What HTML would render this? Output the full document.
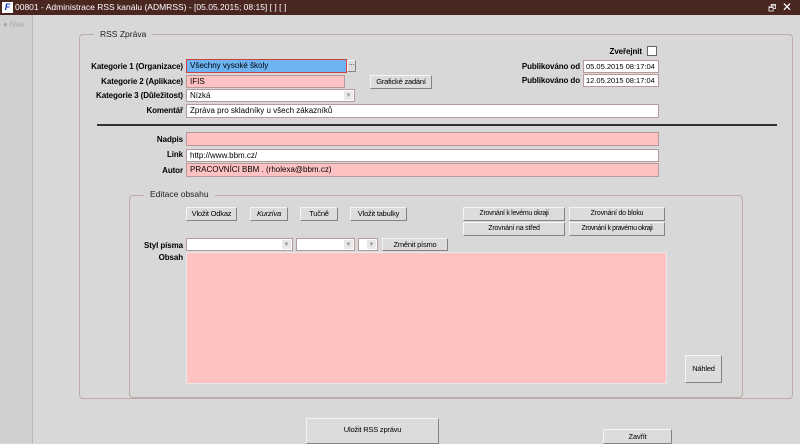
<!DOCTYPE html>
<html><head><meta charset="utf-8"><style>
*{margin:0;padding:0;box-sizing:border-box}
body{width:800px;height:443px;overflow:hidden;background:#d8d8d8;font-family:"Liberation Sans",sans-serif;font-size:8px;color:#000;position:relative}
.a{position:absolute}
.lb{position:absolute;font-weight:bold;text-align:right;white-space:nowrap;font-size:8px;letter-spacing:-0.1px;margin-top:1px}
.f{position:absolute;border:1px solid #b89a9a;padding-left:3px;line-height:12px;white-space:nowrap;overflow:hidden;font-size:8px}
.w{background:#fff}.p{background:#ffc2c2}
.b{position:absolute;background:#dcdcdc;border:1px solid;border-color:#f4f4f4 #8a8080 #8a8080 #f4f4f4;text-align:center;white-space:nowrap;font-size:7.5px;letter-spacing:-0.2px}
.dd{position:absolute;right:1px;top:1px;width:9px;bottom:1px;background:#e8e8e8;color:#999;font-size:6px;text-align:center;line-height:10px}
.box{position:absolute;border:1px solid #c0aaaa;border-radius:4px}
.leg{position:absolute;background:#d8d8d8;padding:0 6px;font-size:8.5px;color:#222}
</style></head><body>
<div class="a" style="left:0;top:0;width:800px;height:15px;background:#4a2620"></div>
<div class="a" style="left:2px;top:2px;width:11px;height:11px;background:#fff;color:#1030c0;font-weight:bold;font-size:9px;line-height:11px;text-align:center;font-style:italic">F</div>
<div class="a" style="left:15px;top:2px;color:#fff;font-size:8.5px;white-space:nowrap">00801 - Administrace RSS kanálu (ADMRSS) - [05.05.2015; 08:15] [ ] [ ]</div>
<div class="a" style="left:768px;top:1px;color:#ddd;font-size:9px">🗗</div>
<div class="a" style="left:782px;top:0px;color:#fff;font-size:12px">✕</div>
<div class="a" style="left:0;top:15px;width:33px;height:428px;background:#d0d0d0;border-right:1px solid #bfb4b4"></div>
<div class="a" style="left:3px;top:20px;color:#aaa;font-size:8px">● Nav</div>

<div class="box" style="left:79px;top:34px;width:714px;height:365px"></div>
<div class="leg" style="left:94px;top:29px">RSS Zpráva</div>

<div class="lb" style="right:617px;top:61px">Kategorie 1 (Organizace)</div>
<div class="f" style="left:186px;top:59px;width:161px;height:14px;background:#6cb4f2;border-color:#d04040">Všechny vysoké školy</div>
<div class="b" style="left:347px;top:60px;width:9px;height:12px;font-size:7px;line-height:6px">...</div>
<div class="lb" style="right:617px;top:76px">Kategorie 2 (Aplikace)</div>
<div class="f p" style="left:186px;top:75px;width:159px;height:13px">IFIS</div>
<div class="b" style="left:370px;top:75px;width:62px;height:14px;line-height:12px">Grafické zadání</div>
<div class="lb" style="right:617px;top:90px">Kategorie 3 (Důležitost)</div>
<div class="f w" style="left:186px;top:89px;width:169px;height:13px">Nízká<div class="dd">▼</div></div>
<div class="lb" style="right:617px;top:105px">Komentář</div>
<div class="f w" style="left:186px;top:104px;width:473px;height:14px">Zpráva pro skladníky u všech zákazníků</div>

<div class="lb" style="right:158px;top:46px">Zveřejnit</div>
<div class="a" style="left:647px;top:46px;width:10px;height:10px;background:#fff;border:1px solid #666"></div>
<div class="lb" style="right:220px;top:61px">Publikováno od</div>
<div class="f w" style="left:583px;top:60px;width:76px;height:13px;font-size:7.5px;padding-left:2px">05.05.2015 08:17:04</div>
<div class="lb" style="right:220px;top:75px">Publikováno do</div>
<div class="f w" style="left:583px;top:74px;width:76px;height:13px;font-size:7.5px;padding-left:2px">12.05.2015 08:17:04</div>

<div class="a" style="left:97px;top:124px;width:680px;height:2px;background:#333"></div>

<div class="lb" style="right:617px;top:134px">Nadpis</div>
<div class="f p" style="left:186px;top:132px;width:473px;height:14px"></div>
<div class="lb" style="right:617px;top:149px">Link</div>
<div class="f w" style="left:186px;top:149px;width:473px;height:13px">http://www.bbm.cz/</div>
<div class="lb" style="right:617px;top:165px">Autor</div>
<div class="f p" style="left:186px;top:163px;width:473px;height:14px">PRACOVNÍCI BBM . (rholexa@bbm.cz)</div>

<div class="box" style="left:129px;top:195px;width:614px;height:203px"></div>
<div class="leg" style="left:144px;top:189px">Editace obsahu</div>

<div class="b" style="left:186px;top:207px;width:51px;height:14px;line-height:12px">Vložit Odkaz</div>
<div class="b" style="left:250px;top:207px;width:38px;height:14px;line-height:12px;font-style:italic">Kurzíva</div>
<div class="b" style="left:300px;top:207px;width:38px;height:14px;line-height:12px">Tučně</div>
<div class="b" style="left:350px;top:207px;width:57px;height:14px;line-height:12px">Vložit tabulky</div>
<div class="b" style="left:463px;top:207px;width:102px;height:14px;line-height:12px;font-size:7px;letter-spacing:-0.3px">Zrovnání k levému okraji</div>
<div class="b" style="left:569px;top:207px;width:96px;height:14px;line-height:12px;font-size:7px">Zrovnání do bloku</div>
<div class="b" style="left:463px;top:222px;width:102px;height:14px;line-height:12px;font-size:7px">Zrovnání na střed</div>
<div class="b" style="left:569px;top:222px;width:96px;height:14px;line-height:12px;font-size:7px;letter-spacing:-0.4px">Zrovnání k pravému okraji</div>

<div class="lb" style="right:617px;top:240px">Styl písma</div>
<div class="f w" style="left:186px;top:238px;width:107px;height:13px"><div class="dd">▼</div></div>
<div class="f w" style="left:296px;top:238px;width:59px;height:13px"><div class="dd">▼</div></div>
<div class="f w" style="left:358px;top:238px;width:20px;height:13px"><div class="dd">▼</div></div>
<div class="b" style="left:382px;top:238px;width:66px;height:13px;line-height:11px">Změnit písmo</div>
<div class="lb" style="right:617px;top:252px">Obsah</div>
<div class="f p" style="left:186px;top:252px;width:481px;height:132px;border-color:#e8e8e8"></div>
<div class="b" style="left:685px;top:355px;width:37px;height:28px;line-height:26px">Náhled</div>

<div class="b" style="left:306px;top:418px;width:133px;height:26px;line-height:22px">Uložit RSS zprávu</div>
<div class="b" style="left:603px;top:429px;width:69px;height:15px;line-height:13px">Zavřít</div>
</body></html>
